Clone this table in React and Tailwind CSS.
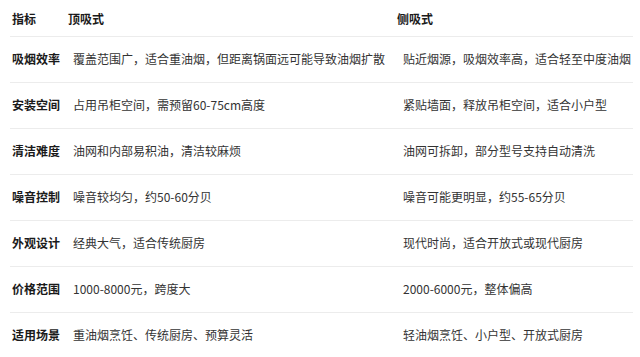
import React from "react";

const rows = [
  ["吸烟效率", "覆盖范围广，适合重油烟，但距离锅面远可能导致油烟扩散", "贴近烟源，吸烟效率高，适合轻至中度油烟"],
  ["安装空间", "占用吊柜空间，需预留60-75cm高度", "紧贴墙面，释放吊柜空间，适合小户型"],
  ["清洁难度", "油网和内部易积油，清洁较麻烦", "油网可拆卸，部分型号支持自动清洗"],
  ["噪音控制", "噪音较均匀，约50-60分贝", "噪音可能更明显，约55-65分贝"],
  ["外观设计", "经典大气，适合传统厨房", "现代时尚，适合开放式或现代厨房"],
  ["价格范围", "1000-8000元，跨度大", "2000-6000元，整体偏高"],
  ["适用场景", "重油烟烹饪、传统厨房、预算灵活", "轻油烟烹饪、小户型、开放式厨房"],
];

export default function App() {
  return (
    <div
      className="w-[640px] h-[357px] bg-white overflow-hidden"
      style={{ fontFamily: '"Noto Sans CJK SC", "Noto Sans", sans-serif' }}
    >
      <table className="ml-[10px] w-[623px] table-fixed border-collapse text-[12px] leading-[16px]">
        <colgroup>
          <col className="w-[56px]" />
          <col className="w-[329px]" />
          <col className="w-[238px]" />
        </colgroup>
        <thead>
          <tr className="h-[36px] border-b border-[#ececec]">
            <th className="pl-[2px] pt-[3px] text-left font-semibold text-[#1a1a1a]">指标</th>
            <th className="pl-[2px] pt-[3px] text-left font-semibold text-[#1a1a1a]">顶吸式</th>
            <th className="pl-[2px] pt-[3px] text-left font-semibold text-[#1a1a1a]">侧吸式</th>
          </tr>
        </thead>
        <tbody>
          {rows.map((r, i) => (
            <tr
              key={i}
              className={
                i < rows.length - 1
                  ? "h-[46px] border-b border-[#ececec]"
                  : "h-[45px]"
              }
            >
              <td className="pl-[2px] font-semibold text-[#1a1a1a] whitespace-nowrap">{r[0]}</td>
              <td className="pl-[7px] text-[#333333] whitespace-nowrap">{r[1]}</td>
              <td className="pl-[8px] text-[#333333] whitespace-nowrap">{r[2]}</td>
            </tr>
          ))}
        </tbody>
      </table>
    </div>
  );
}
